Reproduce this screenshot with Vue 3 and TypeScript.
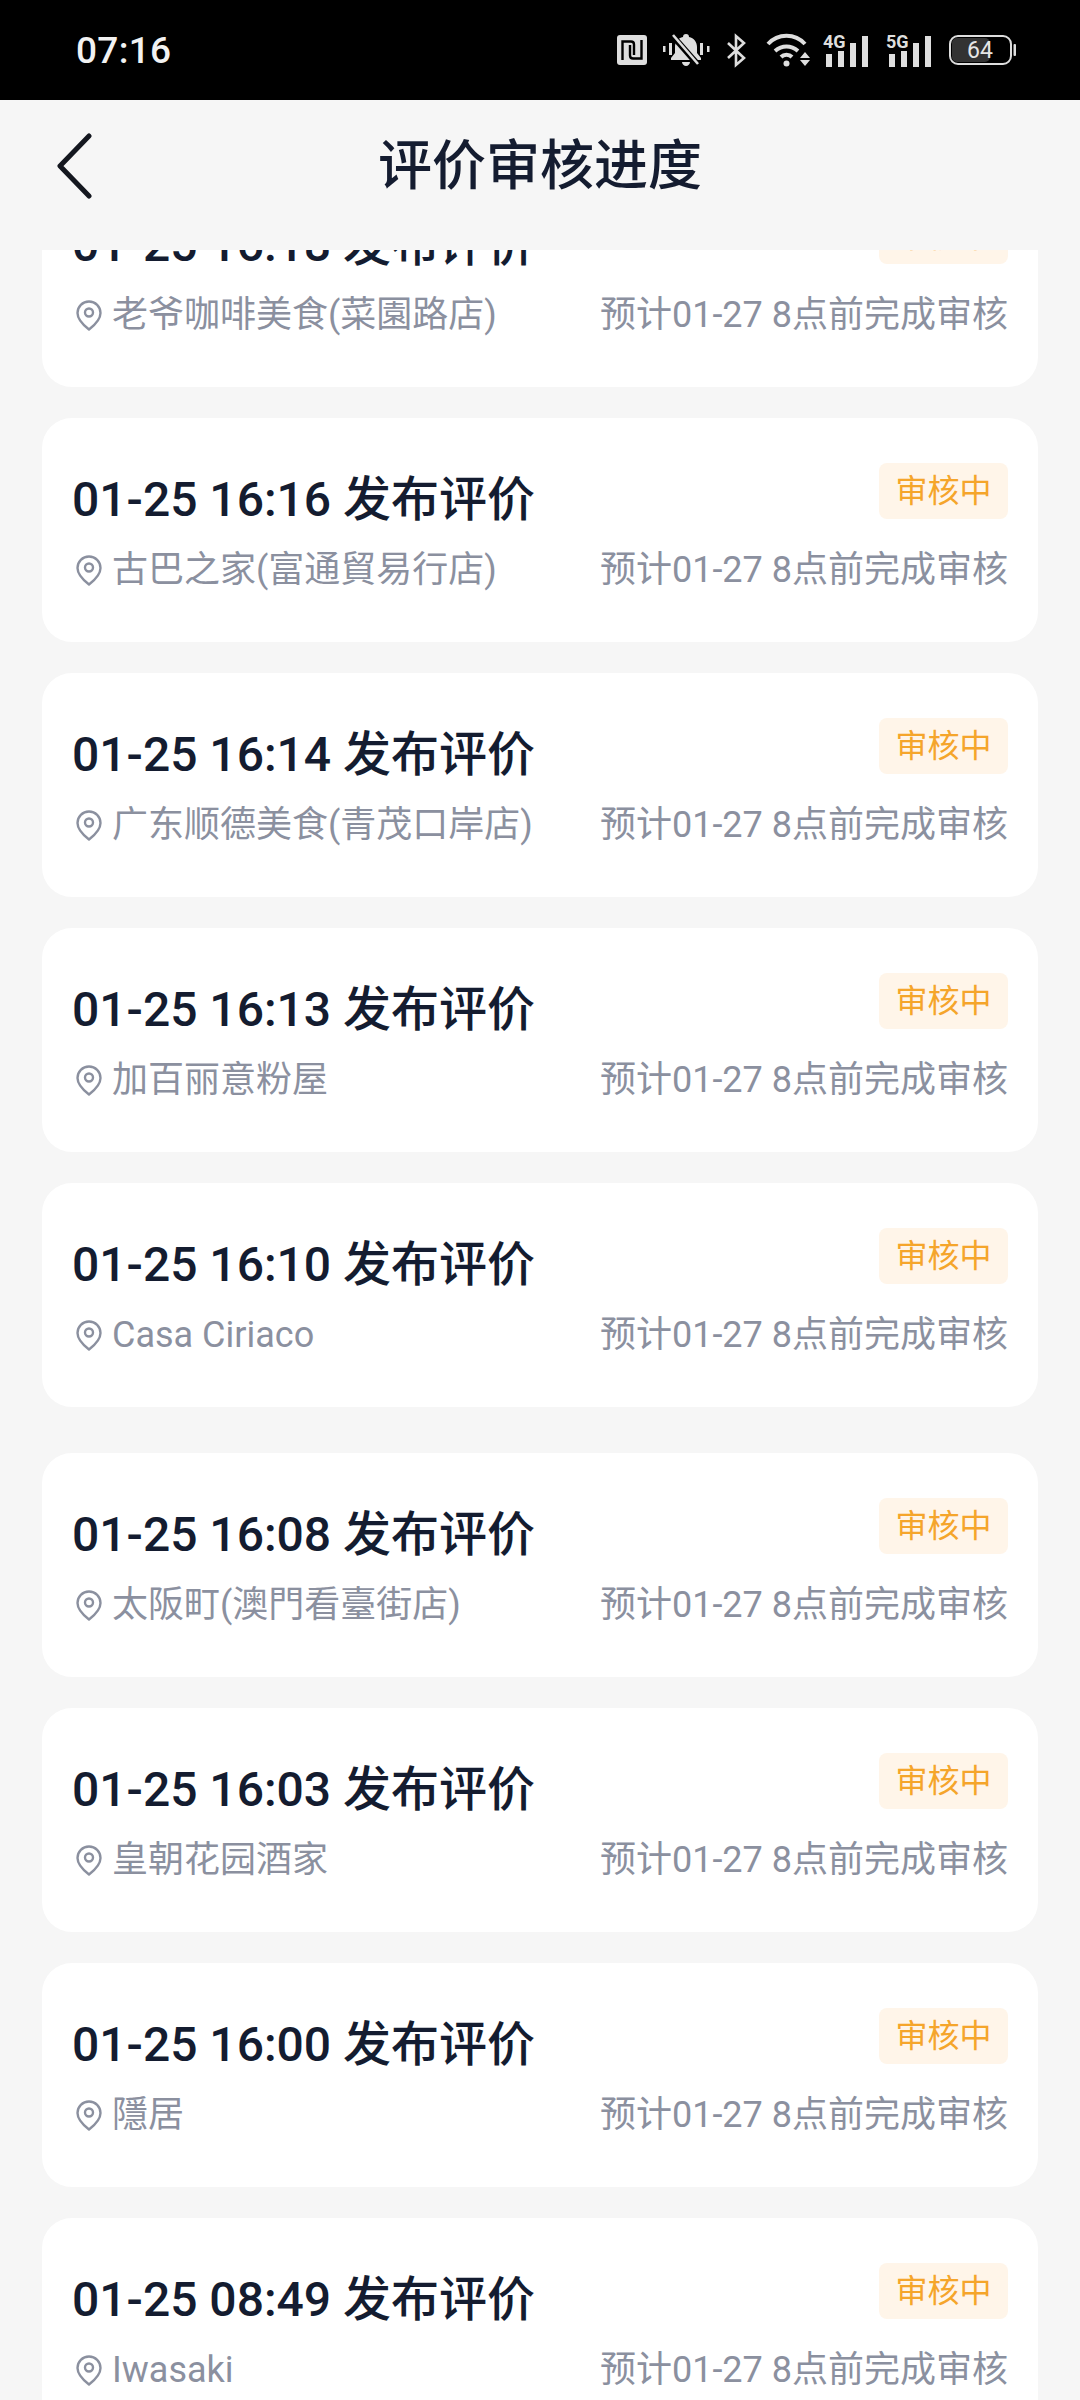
<script setup lang="ts">
interface ReviewItem {
  time: string
  shop: string
  spaced?: boolean
}

const items: ReviewItem[] = [
  { time: '01-25 16:18', shop: '老爷咖啡美食(菜園路店)' },
  { time: '01-25 16:16', shop: '古巴之家(富通貿易行店)' },
  { time: '01-25 16:14', shop: '广东顺德美食(青茂口岸店)' },
  { time: '01-25 16:13', shop: '加百丽意粉屋' },
  { time: '01-25 16:10', shop: 'Casa Ciriaco' },
  { time: '01-25 16:08', shop: '太阪町(澳門看臺街店)', spaced: true },
  { time: '01-25 16:03', shop: '皇朝花园酒家' },
  { time: '01-25 16:00', shop: '隱居' },
  { time: '01-25 08:49', shop: 'Iwasaki' }
]

const bars = [
  { x: 3, y: 20 },
  { x: 15, y: 17 },
  { x: 27, y: 9 },
  { x: 39, y: 2 }
]
</script>

<template>
  <div class="page">
    <div class="status-bar">
      <span class="clock">07:16</span>
      <div class="status-icons">
        <svg class="ic-nfc" width="30" height="30" viewBox="0 0 30 30">
          <rect width="30" height="30" rx="3" fill="#dedede" />
          <path d="M5.500 25V6.500H14q3 0 3 3V20" fill="none" stroke="#000" stroke-width="2.400" />
          <path d="M24.500 5v18.500H16q-3 0-3-3V10" fill="none" stroke="#000" stroke-width="2.400" />
        </svg>
        <svg class="ic-bell" width="48" height="34" viewBox="0 0 48 34">
          <path d="M24 1c-2 0-3 1-3 3-5 1-8 5-8 10v6l-4 5v2h30v-2l-4-5v-6c0-5-3-9-8-10 0-2-1-3-3-3z" fill="#dedede" />
          <path d="M20 29h8c0 2-2 4-4 4s-4-2-4-4z" fill="#dedede" />
          <rect x="1" y="13" width="2.5" height="6" fill="#dedede" />
          <rect x="7" y="10" width="3" height="12" fill="#dedede" />
          <rect x="38" y="10" width="3" height="12" fill="#dedede" />
          <rect x="45" y="13" width="2.5" height="6" fill="#dedede" />
          <path d="M9 1l29 33" stroke="#000" stroke-width="6" />
          <path d="M11 2l25 29" stroke="#dedede" stroke-width="2.6" />
        </svg>
        <svg class="ic-bt" width="21" height="33" viewBox="0 0 21 33">
          <path d="M2 9l16 15-8 7V2l8 7L2 24" fill="none" stroke="#dedede" stroke-width="2.6" />
        </svg>
        <svg class="ic-wifi" width="46" height="34" viewBox="0 0 46 34">
          <path d="M2 11C12 0 29 0 39 11" fill="none" stroke="#dedede" stroke-width="4" />
          <path d="M9 18c7-6 16-6 23 0" fill="none" stroke="#dedede" stroke-width="4" />
          <path d="M15 24c3-3 8-3 11 0" fill="none" stroke="#dedede" stroke-width="4" />
          <circle cx="20.500" cy="30.500" r="3" fill="#dedede" />
          <path d="M34 25l5-6 5 6zM34 27h10l-5 6z" fill="#dedede" />
        </svg>
        <svg v-for="net in ['4G', '5G']" :key="net" class="ic-net" width="47" height="33" viewBox="0 0 47 33">
          <text x="0" y="14" class="net-label">{{ net }}</text>
          <rect v-for="bar in bars" :key="bar.x" :x="bar.x" :y="bar.y" width="6" :height="33 - bar.y" fill="#dedede" />
        </svg>
        <svg class="ic-battery" width="67" height="30" viewBox="0 0 67 30">
          <rect x="3" y="3" width="38" height="24" rx="5" fill="#333" />
          <rect x="1" y="1" width="61" height="28" rx="8" fill="none" stroke="#dedede" stroke-width="2" />
          <rect x="64.500" y="9" width="2.500" height="12" rx="1" fill="#dedede" />
          <text x="31" y="23" class="battery-label" text-anchor="middle">64</text>
        </svg>
      </div>
    </div>

    <header class="nav">
      <svg class="back" width="38" height="66" viewBox="0 0 38 66">
        <path d="M34 3L5 33l29 30" fill="none" stroke="#14171f" stroke-width="5" stroke-linecap="round" stroke-linejoin="round" />
      </svg>
      <h1 class="nav-title">评价审核进度</h1>
    </header>

    <div class="list-wrap">
      <div class="list">
        <section v-for="item in items" :key="item.time" class="card" :class="{ spaced: item.spaced }">
          <div class="row-top">
            <h2 class="card-title">{{ item.time }} 发布评价</h2>
            <span class="badge">审核中</span>
          </div>
          <div class="row-bottom">
            <span class="shop">
              <svg class="pin" width="26" height="31" viewBox="0 0 26 31">
                <path d="M13 1.500C6.600 1.500 1.500 6.600 1.500 13c0 6 5 11.500 11.500 16.500C19.500 24.500 24.500 19 24.500 13 24.500 6.600 19.400 1.500 13 1.500z" fill="none" stroke="#8b909f" stroke-width="2.400" stroke-linejoin="round" />
                <circle cx="13" cy="12.500" r="4" fill="none" stroke="#8b909f" stroke-width="2.400" />
              </svg>
              {{ item.shop }}
            </span>
            <span class="eta">预计01-27 8点前完成审核</span>
          </div>
        </section>
      </div>
    </div>
  </div>
</template>

<style>
html,
body {
  margin: 0;
  background: #f6f6f6;
}
</style>

<style scoped>
.page {
  width: 1080px;
  height: 2400px;
  overflow: hidden;
  background: #f6f6f6;
  display: flex;
  flex-direction: column;
  font-family: Roboto, "Noto Sans CJK SC", sans-serif;
}

.status-bar {
  flex: none;
  height: 100px;
  background: #000;
  display: flex;
  align-items: center;
  justify-content: space-between;
  padding: 0 64px 0 76px;
}

.clock {
  color: #f2f2f2;
  font-size: 37px;
  font-weight: 500;
  letter-spacing: 0.3px;
}

.status-icons {
  display: flex;
  align-items: center;
}

.status-icons svg {
  display: block;
  overflow: visible;
}

.ic-bell {
  margin-left: 15px;
}

.ic-bt {
  margin-left: 16px;
}

.ic-wifi {
  margin-left: 19px;
}

.ic-net {
  margin-left: 11px;
}

.ic-net + .ic-net {
  margin-left: 16px;
}

.ic-battery {
  margin-left: 16px;
}

.net-label {
  font-family: Roboto, sans-serif;
  font-size: 18px;
  font-weight: 700;
  fill: #dedede;
}

.battery-label {
  font-family: Roboto, sans-serif;
  font-size: 23px;
  fill: #e6e6e6;
}

.nav {
  flex: none;
  height: 150px;
  box-sizing: border-box;
  padding-bottom: 28px;
  position: relative;
  display: flex;
  align-items: center;
  justify-content: center;
}

.back {
  position: absolute;
  left: 55px;
  top: 33px;
}

.nav-title {
  margin: 0;
  font-size: 54px;
  font-weight: 500;
  color: #141c30;
}

.list-wrap {
  flex: 1;
  overflow: hidden;
}

.list {
  margin-top: -87px;
  padding: 0 42px;
  display: flex;
  flex-direction: column;
  gap: 31px;
}

.card {
  flex: none;
  height: 224px;
  box-sizing: border-box;
  padding: 45px 30px 0;
  background: #fff;
  border-radius: 30px;
}

.card.spaced {
  margin-top: 15px;
}

.row-top,
.row-bottom {
  display: flex;
  justify-content: space-between;
}

.row-top {
  align-items: flex-start;
  height: 56px;
}

.row-bottom {
  align-items: center;
  margin-top: 27px;
  height: 48px;
}

.card-title {
  margin: 8px 0 0;
  font-size: 48px;
  line-height: 58px;
  font-weight: 500;
  color: #141c30;
}

.badge {
  width: 129px;
  height: 56px;
  line-height: 56px;
  text-align: center;
  border-radius: 8px;
  background: #fff5e9;
  color: #f5a52b;
  font-size: 32px;
}

.shop,
.eta {
  font-size: 36px;
  line-height: 48px;
  color: #8b909f;
}

.shop {
  display: flex;
  align-items: center;
  gap: 10px;
  margin-left: 4px;
}
</style>
